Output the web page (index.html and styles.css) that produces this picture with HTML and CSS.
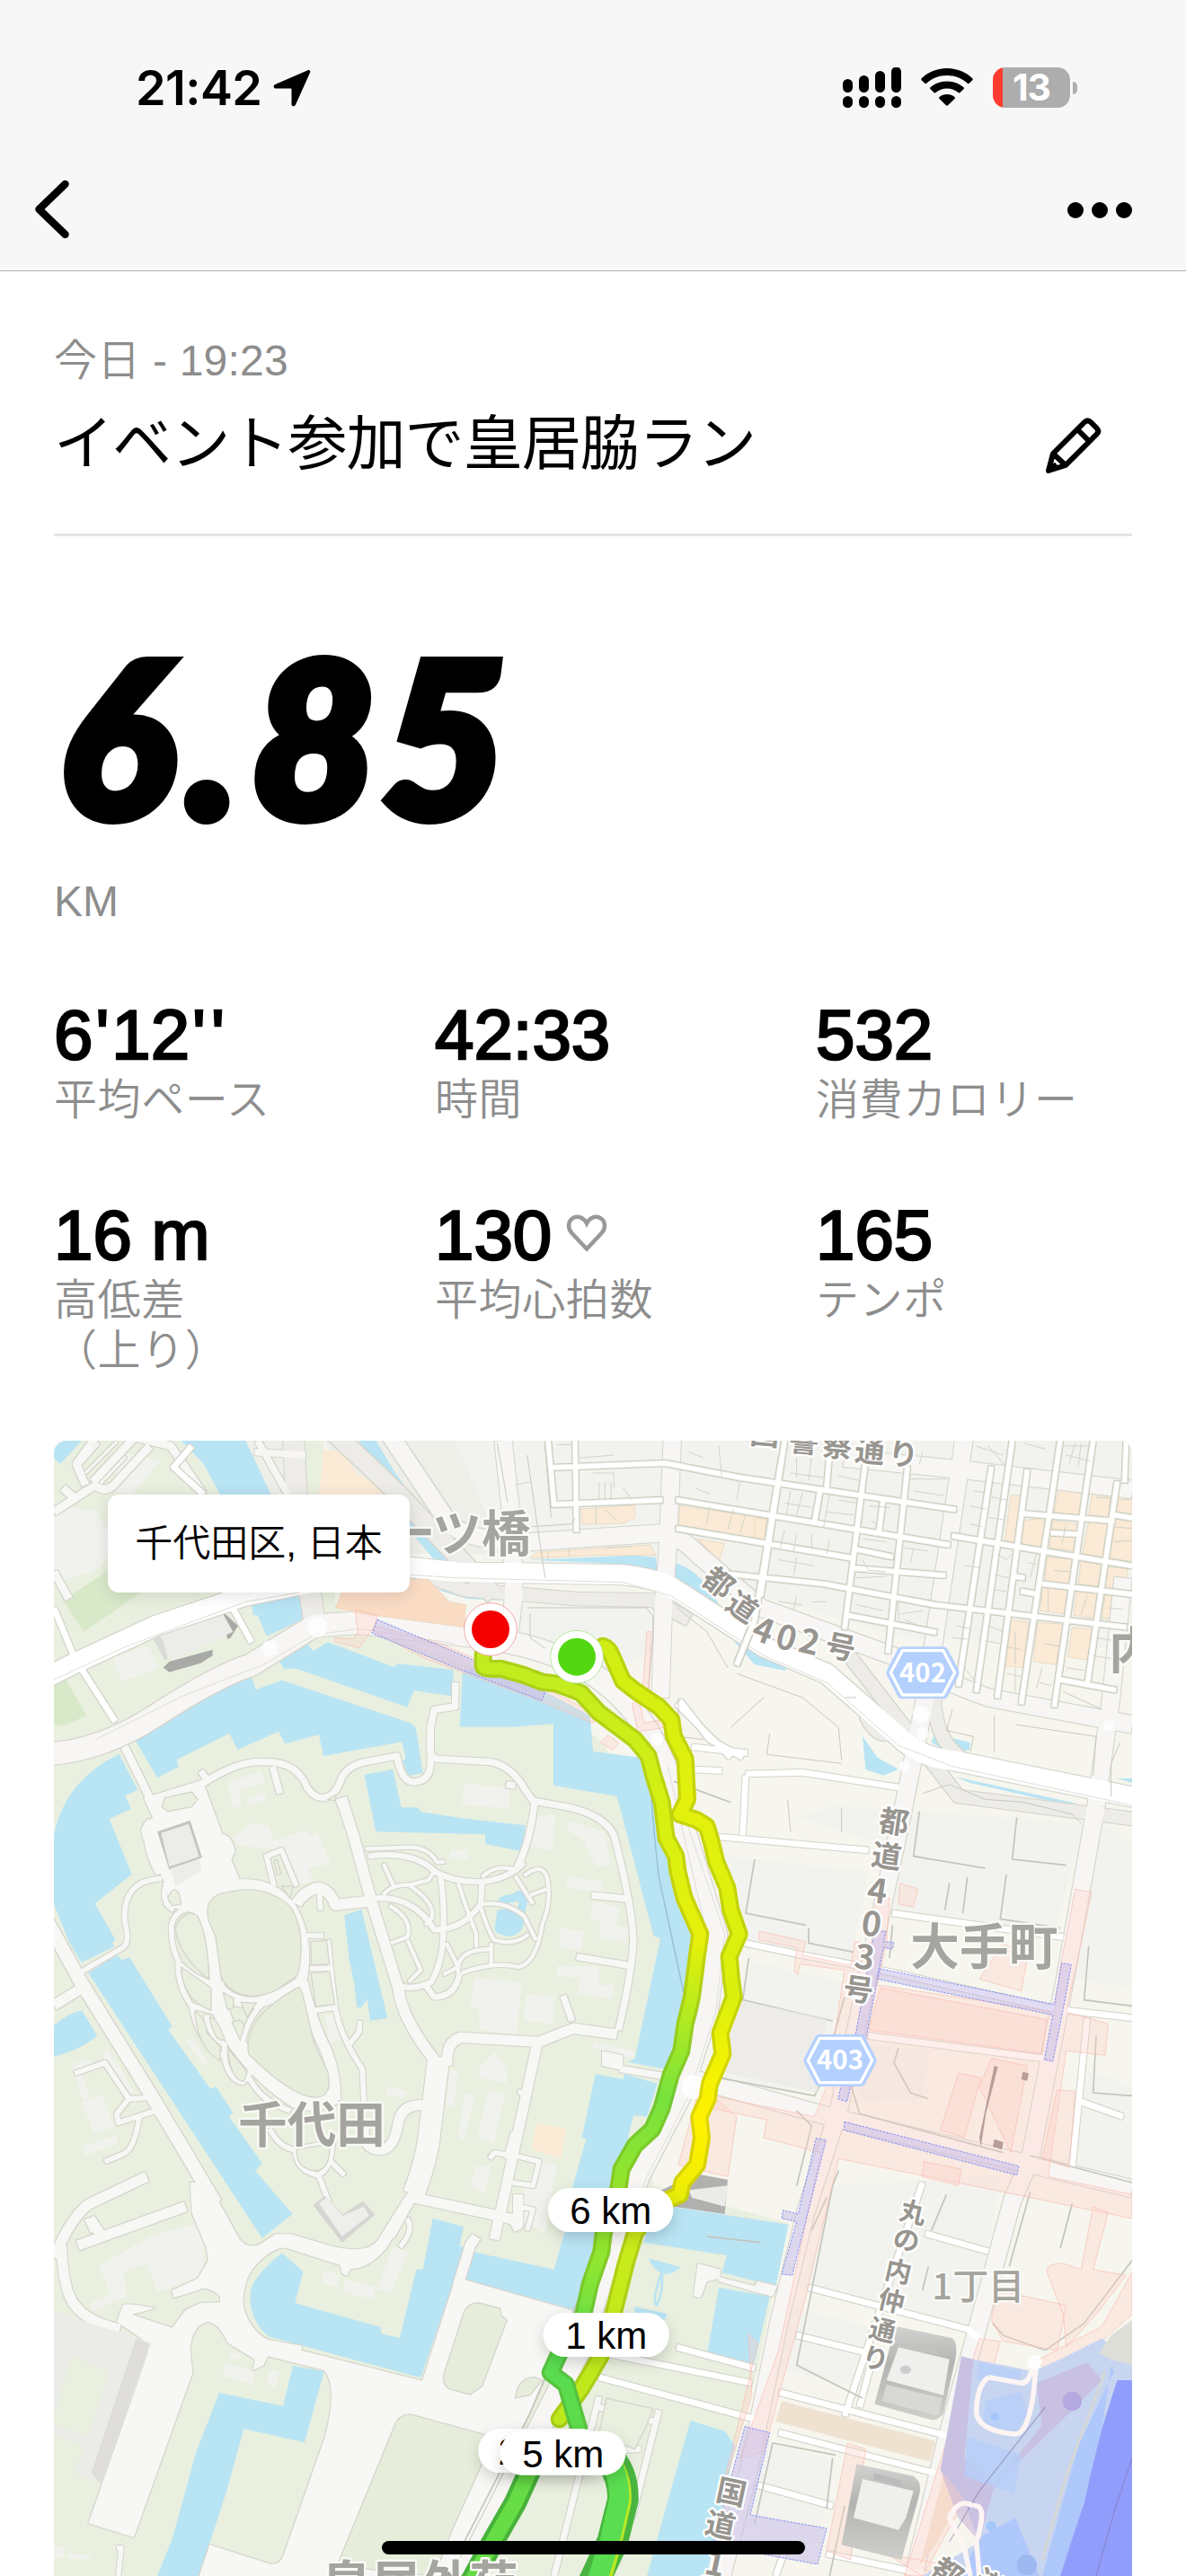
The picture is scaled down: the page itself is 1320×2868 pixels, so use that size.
FILE: index.html
```html
<!DOCTYPE html>
<html lang="ja">
<head>
<meta charset="utf-8">
<title>イベント参加で皇居脇ラン</title>
<link rel="stylesheet" href="styles.css">
</head>
<body>
<div class="screen">
  <header class="top">
    <div class="status">
      <div class="clock"><span>21:42</span>
        <svg class="loc" viewBox="0 0 42 42"><path d="M38.500 1.200C40.500.3 42 1.800 41 4L25 39.500C24 42 20.500 41.800 20.500 39V22.500Q20.500 21.500 19.500 21.500H3C.2 21.500-.2 18 2.200 17Z"/></svg>
      </div>
      <div class="indicators">
        <svg class="signal" viewBox="0 0 65 45"><path d="M5.500 18.500v4M23.500 14.500v8M41.500 9.500v13M59.500 5v17.500M5.500 37.500v2M23.500 37.500v2M41.500 37.500v2M59.500 37.500v2"/></svg>
        <svg class="wifi" viewBox="0 0 58 42"><path d="M29 0C41 0 51 5 57.300 11.200Q58.200 12.200 57.300 13.200L53.800 16.700Q52.800 17.600 51.800 16.700C45.500 11 38 7.900 29 7.900S12.500 11 6.200 16.700Q5.200 17.600 4.200 16.700L.7 13.200Q-.2 12.200.7 11.200C7 5 17 0 29 0ZM29 14.500C37 14.500 43.500 17.500 47.500 21.300Q48.400 22.200 47.500 23.200L43.600 27Q42.600 28 41.600 27.100C38 24 34 22.400 29 22.400S20 24 16.400 27.100Q15.400 28 14.400 27L10.500 23.200Q9.600 22.200 10.500 21.300C14.500 17.500 21 14.500 29 14.500ZM29 29C32.500 29 35.300 30.200 37.500 32Q38.400 33 37.500 34L30 41.300Q29 42.200 28 41.300L20.500 34Q19.600 33 20.500 32C22.700 30.200 25.500 29 29 29Z"/></svg>
        <div class="battery"><span>13</span></div>
      </div>
    </div>
    <nav class="nav">
      <svg class="back" viewBox="0 0 40 66"><path d="M34.500 5L5.500 33 34.500 61"/></svg>
      <svg class="more" viewBox="0 0 72 18"><circle cx="9" cy="9" r="9"/><circle cx="36" cy="9" r="9"/><circle cx="63" cy="9" r="9"/></svg>
    </nav>
  </header>

  <main>
    <section class="title">
      <div>
        <p class="date">今日 - 19:23</p>
        <h1>イベント参加で皇居脇ラン</h1>
      </div>
      <svg class="pencil" viewBox="0 0 64 64"><path d="M4 60L9 41 44 6Q47.500 2.500 51 6L57.500 12.500Q61 16 57.500 19.500L23 54ZM9 41L23 54M36 14L49 27M4 60L13 53"/></svg>
    </section>

    <section class="distance">
      <p class="big"><span>6.</span>85</p>
      <p class="unit">KM</p>
    </section>

    <section class="stats">
      <div><b class="pace">6<i>'</i>12<i>'</i><i>'</i></b><span>平均ペース</span></div>
      <div><b>42:33</b><span>時間</span></div>
      <div><b>532</b><span>消費カロリー</span></div>
      <div><b>16 m</b><span>高低差<br>（上り）</span></div>
      <div><b>130<svg class="heart" viewBox="0 0 46 42"><path d="M23 38.500L6.500 21C1 15 2.500 7 8 4S20 4 23 10C26 4 32.500 1 38 4S45 15 39.500 21Z"/></svg></b><span>平均心拍数</span></div>
      <div><b>165</b><span>テンポ</span></div>
    </section>

    <section class="map">
      <svg class="canvas" viewBox="60 42 3600 3792">
        <defs>
          <filter id="rim" filterUnits="userSpaceOnUse" x="0" y="0" width="3720" height="3900"><feMorphology in="SourceAlpha" operator="dilate" radius="4" result="d"/><feFlood flood-color="#d5d4cc"/><feComposite in2="d" operator="in"/><feMerge><feMergeNode/><feMergeNode in="SourceGraphic"/></feMerge></filter>
          <filter id="curb" filterUnits="userSpaceOnUse" x="0" y="0" width="3720" height="3900"><feMorphology in="SourceAlpha" operator="dilate" radius="7" result="o"/><feMorphology in="SourceAlpha" operator="dilate" radius="4" result="i"/><feFlood flood-color="#c9cabf"/><feComposite in2="o" operator="in" result="c"/><feFlood flood-color="#f1f1ea"/><feComposite in2="i" operator="in" result="k"/><feMerge><feMergeNode in="c"/><feMergeNode in="k"/><feMergeNode in="SourceGraphic"/></feMerge></filter>
          <filter id="drop" x="-30%" y="-50%" width="160%" height="230%"><feDropShadow dx="0" dy="18" stdDeviation="22" flood-opacity=".16"/></filter>
          <linearGradient id="gw" gradientUnits="userSpaceOnUse" x1="0" y1="760" x2="0" y2="3834"><stop offset="0" stop-color="#c0ec20"/><stop offset=".17" stop-color="#d6f012"/><stop offset=".31" stop-color="#e6f00a"/><stop offset=".4" stop-color="#aeea22"/><stop offset=".48" stop-color="#78e23e"/><stop offset=".58" stop-color="#96e52c"/><stop offset=".66" stop-color="#90e630"/><stop offset=".76" stop-color="#58dc50"/><stop offset="1" stop-color="#66dd45"/></linearGradient>
          <linearGradient id="ge" gradientUnits="userSpaceOnUse" x1="0" y1="720" x2="0" y2="3320"><stop offset="0" stop-color="#cfee14"/><stop offset=".2" stop-color="#e3f10c"/><stop offset=".45" stop-color="#d9f00e"/><stop offset=".53" stop-color="#f0f204"/><stop offset=".62" stop-color="#fff200"/><stop offset=".69" stop-color="#f2ee04"/><stop offset=".77" stop-color="#c9ec1a"/><stop offset="1" stop-color="#bde81c"/></linearGradient>
          <linearGradient id="shade" x1="0" y1="0" x2="0" y2="1"><stop offset="0" stop-color="#d2d2d0"/><stop offset=".4" stop-color="#b3b3b1"/><stop offset="1" stop-color="#cfcfcc"/></linearGradient>
          <g id="track-w"><path d="M1493 755V795Q1495 806 1550 803L1630 825 1690 848 1740 854 1820 885 1880 950 1940 995 2000 1040 2045 1095 2062 1160 2090 1250 2095 1290 2105 1370 2137 1430 2143 1480 2165 1570 2218 1690 2208 1760 2190 1900 2168 1990 2155 2080 2120 2160 2090 2270 2058 2342 2000 2395 1955 2475 1945 2540 1895 2690 1888 2750 1850 2860 1828 2960 1748 3090 1718 3155 1770 3195 1812 3340"/></g>
          <g id="track-e"><path d="M1893 728Q1915 735 1925 765L1960 845 2005 880 2080 930 2122 975 2130 1030 2168 1105 2175 1240 2150 1290 2205 1308 2240 1330 2255 1380 2272 1450 2308 1535 2320 1610 2348 1690 2315 1765 2322 1840 2330 1900 2285 2020 2293 2090 2250 2190 2243 2240 2215 2300 2223 2370 2208 2460 2158 2520 2150 2560 2060 2600 2000 2690 1970 2790 1930 2950 1885 3100 1820 3210 1748 3310"/></g>
        </defs>

        <rect class="city" x="60" y="42" width="3600" height="3792"/>
        <path class="lot" d="M1200 42H3660V740L2900 700 2200 500 1500 440ZM1560 590H2060V740L1900 830 1560 740ZM2540 1300 2660 1260 3500 1320 3400 1690 2830 1620 2800 1380ZM2290 1430 2780 1480 2720 1780 2340 1700ZM2380 1780 2700 1850 2600 2220 2260 2180ZM2780 2060 2980 2080 2960 2240 2740 2250ZM3560 1320 3660 1390V1870L3470 1840ZM3500 2140 3660 2200V2500L3440 2460ZM2660 2530 3220 2500 3130 3000 2560 2880ZM2500 2930 2780 3000 2760 3210 2480 3140ZM2440 3380 2670 3450 2610 3720 2350 3660Z"/>
        <path class="park" d="M60 42H960L1000 600 1300 740 1700 880 1900 1060 2060 1400 2180 1800 2120 2100 2050 2300 2060 2530 2510 2655 2410 3140 2220 3834H60Z"/>
        <path class="haze" d="M500 42 860 42 900 230 700 250ZM960 42H1400L1560 420H1240Z"/>
        <path class="lawn" d="M90 575 250 470 350 550 160 680ZM60 840H100L170 960 90 995 60 990Z"/>
        <g class="buildings">
          <path d="M60 300 100 265 200 275 240 340V430L208 472 90 510 60 470ZM255 768 375 725 410 800 288 848ZM290 80 415 110 320 222 250 210ZM640 1185 750 1145 765 1185 680 1210 685 1260 660 1270ZM700 1240 760 1215 770 1240 720 1262Z"/>
          <path d="M655 1370 720 1320 780 1330 790 1380 905 1340 915 1365 860 1390 940 1350 985 1455 910 1470 925 1515 880 1525 830 1410 680 1395ZM120 2125 180 2105 190 2130 130 2160ZM130 2160 155 2160 180 2235 155 2240ZM150 2250 220 2225 262 2335 195 2355ZM220 2090 240 2075 330 2215 310 2225ZM155 2400 270 2360 270 2390 165 2430ZM500 2045 525 2035 575 2120 560 2130ZM1175 2200 1240 2215 1230 2240 1170 2225ZM965 1965 1005 1955 1022 2040 980 2055Z"/>
          <path d="M1427 1188 1580 1200 1580 1270 1425 1260ZM1650 1300 1735 1290 1725 1410 1655 1400ZM1775 1310 1900 1350 1920 1460 1870 1465 1830 1380 1775 1340ZM1465 1835 1622 1850 1605 2025 1480 2010 1480 1940 1450 1930ZM1635 1890 1735 1900 1725 1990 1630 1980ZM1750 1670 1828 1680 1822 1745 1750 1735ZM1860 1580 1950 1600 1940 1660 1850 1640ZM1885 1650 1980 1670 1970 1715 1880 1705ZM1740 1795 1880 1800 1880 1860 1930 1860 1925 1905 1810 1890 1815 1835 1740 1830ZM1775 1498 1895 1515 1890 1550 1772 1535ZM1385 1410 1440 1405 1445 1440 1380 1440ZM1380 2145 1410 2145 1395 2270 1370 2260ZM1430 2220 1465 2230 1430 2380 1410 2370ZM1510 2210 1565 2225 1530 2390 1475 2370ZM1480 2140 1530 2085 1575 2140 1570 2190 1480 2170ZM1470 2465 1520 2460 1500 2560 1450 2530ZM1860 2050 2000 2080 1995 2105 1860 2070ZM1680 2450 1740 2460 1700 2690 1590 2620Z"/>
          <path d="M270 2765 380 2700 525 2660 560 2700 560 2830 405 2885 370 2790 290 2820 305 2900 190 2950 180 2925 250 2890 210 2800ZM960 2812 1015 2830 1005 2870 955 2855ZM1030 2840 1135 2868 1125 2910 1025 2885ZM1190 2735 1243 2752 1185 2890 1140 2875ZM635 3122 733 3150 722 3195 622 3165ZM650 3085 685 3090 680 3110 645 3105ZM780 3148 812 3150 800 3205 772 3190ZM60 3735 95 3737V3773H60ZM105 3760 185 3765V3778H105Z"/>
        </g>
        <g class="beige">
          <path d="M960 70 1030 85 1070 150 1180 215 1130 222H945ZM1670 2320 1770 2340 1755 2440 1655 2410Z"/>
          <path d="M1820 270 2000 258V300L1960 318 1825 322ZM1670 415 2050 390 2070 425 1860 425 1650 435ZM2150 260 2440 300 2432 378 2250 350 2145 330ZM2210 370 2300 385 2280 445ZM2400 300 2445 305 2440 378 2400 375Z"/>
          <path d="M3255 225 3290 225 3270 382 3235 375ZM3420 182 3500 192 3485 300 3400 285ZM3530 200 3590 210 3580 300 3515 290ZM3610 210 3660 212V292L3605 285ZM3290 310 3370 300 3360 400 3280 385ZM3395 310 3480 320 3475 410 3385 400ZM3515 310 3585 318 3570 432 3495 420ZM3600 302 3660 308V445L3580 435ZM3375 430 3465 437 3450 522 3370 515ZM3490 445 3560 455 3545 528 3480 520ZM3578 463 3645 470 3640 545 3565 538ZM3360 530 3450 540 3440 622 3355 610ZM3475 540 3545 550 3540 635 3465 625ZM3570 555 3635 560 3620 642 3560 635ZM3255 640 3315 648 3295 800 3235 795ZM3345 650 3430 655 3405 790 3330 780ZM3460 665 3535 672 3520 775 3445 765Z"/>
        </g>

        <g class="water">
          <path d="M60 42H152L82 120 60 100ZM485 42 560 120 615 222 700 400 715 549 725 625 740 625 770 695 905 632 870 549 785 222 700 42ZM1080 42H1135L1200 150 1300 290 1370 400 1450 440 1330 440 1230 320 1120 160Z"/>
          <path d="M330 1040Q500 910 720 833L735 873 822 842 1250 985 1268 1000 1292 1152 1240 1162 1225 1110 1235 1105 1222 1048 960 1095 945 1024 832 1054 810 1013 673 1074 646 1020 470 1108 476 1132 405 1168ZM805 765 900 712 925 745 975 715 1195 798 1210 787 1395 808 1390 895 1262 877 1240 932 865 802 828 805Z"/>
          <path d="M1425 810 1480 800 1700 880 1850 960 1860 1080 2020 1100 2070 1290 2120 1460 2200 1700 2170 1910 2140 2110 2095 2140 1978 2118 2000 2105 2085 1705 2062 1695 1948 1260 1940 1230 1728 1193 1728 988 1590 998 1415 998Z"/>
          <path d="M60 1365Q90 1180 278 1088L340 1208 298 1228 318 1272 245 1305 320 1490 197 1588 265 1708 255 1720 262 1732 152 1785 110 1715 60 1590ZM175 1820 270 1758 288 1777 312 1767 455 1998 442 2010 583 2208 600 2198 658 2285 645 2300 755 2455 732 2480 857 2625 755 2705ZM60 1995Q120 1945 155 1947L205 2030Q150 2075 60 2100ZM1030 1627 1087 1607 1174 1970 1116 1980 1106 1908 1085 1935 1072 1935 1062 1850 1045 1770ZM1097 1157 1192 1140 1220 1267 1275 1267 1285 1282 1440 1305 1635 1327 1620 1413 1500 1390V1357L1135 1348 1117 1260Z"/>
          <path d="M1543 1580Q1545 1560 1590 1557 1620 1530 1645 1560L1630 1640Q1630 1690 1580 1698 1530 1690 1532 1670L1540 1610 1575 1605 1610 1600 1612 1580 1570 1588Z"/>
          <path d="M1868 2158 1962 2175 1965 2157 2075 2190 2040 2300 1995 2295 1950 2480 1900 2600 1860 2800 1800 2945 1432 2845 1455 2750 1730 2810 1765 2685 1790 2540 1837 2375 1823 2368ZM822 2755 892 2817 865 2923 1150 3002 1153 3025 1215 3038 1270 2810 1292 2810 1325 2640 1428 2667 1415 2730 1432 2738 1395 2850 1285 3172 780 3035Q715 2990 715 2895 715 2840 822 2755ZM612 3222 825 3266 858 3132 962 3150 897 3388 694 3342 640 3540 545 3834H405L455 3710 535 3420Z"/>
          <path d="M2060 2590 2120 2600 2513 2660 2470 2870 2405 2850 2290 2820 2307 2763 2030 2720ZM2280 2870 2450 2900 2400 3120 2370 3135 2240 3100ZM2185 3315 2300 3350 2335 3400 2240 3834H2040ZM2045 2773 2153 2803Q2085 2860 2045 2773ZM2000 2935 2108 2958 2090 3000 2000 2970Z"/>
          <path d="M1650 440 2000 425 2070 432 2075 475 1980 455ZM1340 540H1545V575L1440 570ZM2135 450Q2230 480 2290 610L2520 790 2500 810 2400 790 2320 700 2130 510ZM2760 1030 2810 1100 2880 1140 2830 1160 2770 1140ZM3000 1020 3118 1050V1075L3050 1085 2990 1050ZM3070 1165 3480 1255 3440 1258 3120 1185ZM3610 1170 3660 1185V1170Z"/>
          <path d="M2090 2820Q2055 2910 2072 2930 2095 2890 2090 2820" fill="none" stroke="#b9e4f4" stroke-width="8"/>
        </g>

        <g class="paths" filter="url(#rim)">
          <path stroke-width="22" d="M385 1240 560 1185Q680 1108 760 1115 870 1110 905 1200 930 1237 960 1235 1000 1230 1020 1170 1040 1128 1100 1115L1205 1095Q1220 1180 1260 1182 1320 1180 1318 1110L1318 985M790 1130 815 1220M1010 1240 1035 1290M550 1145 575 1180M1400 850V930L1330 940 1318 1000 1315 1070Q1320 1108 1350 1105L1520 1115Q1590 1130 1635 1210L1660 1245 1770 1265Q1895 1290 1930 1360 1990 1590 1995 1710 1990 1820 1945 2010M1665 1250Q1650 1390 1600 1480M1855 1560 1970 1572M1805 1765 1980 1795M1760 1895 1790 1980M1950 2140 2100 2165M1570 1190 1600 1195"/>
          <path stroke-width="26" d="M288 1048 385 1245M165 190 135 120 200 30M190 180 330 30 450 60 560 222M195 190Q230 220 260 190L380 60M60 280 200 190M90 200 130 235M60 480 110 570"/>
          <path stroke-width="9" d="M140 130 210 50M165 150 270 45M215 185 300 95"/>
          <path class="fill" d="M360 1235 560 1185 622 1355Q655 1360 665 1415L652 1440 680 1508Q780 1510 850 1590L700 1545Q570 1550 570 1610L590 1850 560 1700 530 1620 450 1600 430 1520 350 1340 390 1300Z"/>
          <path stroke-width="36" d="M560 1610Q590 1700 600 1850 640 1922 730 1920 800 1910 885 1850 915 1710 850 1600 790 1520 690 1525 600 1530 560 1580ZM890 1850Q920 1980 960 2060 1000 2140 1000 2245M1020 1235 1060 1360 1120 1580 1210 1870Q1220 1970 1330 2110M870 1590Q890 1550 940 1535 980 1540 1000 1592L1115 1580"/>
          <path stroke-width="54" d="M600 1850Q610 1960 660 2040 750 2170 870 2245 930 2265 1000 2230"/>
          <path stroke-width="17" d="M545 1605Q470 1595 452 1660 450 1730 475 1780 470 1860 520 1930 540 2050 630 2100 640 2175 690 2185 720 2160 715 2130M480 1790Q530 1840 590 1855M520 1930 600 1950M570 1960Q570 2020 630 2060V2100M712 2170Q750 2250 850 2280M380 1310Q350 1340 370 1380 380 1440 410 1490M440 1510Q410 1580 460 1610M145 1820 290 1735Q315 1720 297 1650 285 1510 420 1505M945 1535 950 1610M905 1695H960M975 1710Q985 1820 1000 1940 1020 2040 1090 2140L1095 2250M1045 2060 1080 2015 1082 1980M915 1805H985M930 1945 1000 1935M770 1910Q710 1960 690 2050M780 2340Q810 2400 860 2410L990 2385M865 2410Q870 2480 940 2495 985 2480 990 2390M985 2450 1030 2495M945 2500 980 2590M1610 2215 1640 2230M795 1530 770 1430 820 1410 870 1530M130 2155 230 2120 310 2240 330 2240 380 2235M310 2240 270 2290 275 2320 400 2280M345 2300Q330 2410 290 2425L230 2450"/>
          <path stroke-width="13" d="M1100 1405 1250 1400Q1310 1400 1340 1450L1365 1448M1160 1455 1195 1530M1160 1560Q1180 1525 1250 1525L1310 1510 1330 1480M1250 1530Q1340 1590 1320 1640L1300 1660M1180 1595Q1260 1640 1240 1700L1185 1720M1240 1710 1285 1810 1245 1850M1490 1500Q1530 1455 1600 1475M1600 1495 1660 1590M1630 1495Q1700 1440 1710 1520 1720 1590 1690 1660 1670 1790 1610 1800 1530 1780 1420 1820M1490 1590Q1570 1580 1630 1630L1670 1710M1485 1600Q1510 1680 1530 1710 1600 1730 1645 1690M1520 1720V1790M1410 1820Q1400 1740 1520 1740M1410 1520 1430 1580 1470 1690V1735M1650 1560 1705 1540M1370 1720 1410 1800M1360 1825 1410 1800"/>
          <path stroke-width="19" d="M1110 1430Q1260 1410 1330 1480 1400 1520 1490 1515 1580 1505 1630 1450M1350 1490Q1365 1590 1360 1680 1360 1780 1320 1850 1260 1880 1210 1862M1300 1860 1330 1900Q1400 1900 1415 1820M1490 1510 1485 1590Q1420 1680 1330 1675 1260 1560 1130 1570"/>
          <path stroke-width="34" d="M1375 2130Q1365 2050 1420 2035L1680 2050 1795 2005 1940 2025M1095 2330Q1090 2410 1150 2410 1195 2410 1210 2320 1220 2260 1290 2260M1675 2050 1560 2580 1530 2710M60 1928 145 1875M220 2700 180 2640"/>
          <path stroke-width="44" d="M40 1650 150 1850 380 2220 500 2420 600 2590"/>
          <path stroke-width="72" d="M1345 2100 1310 2390Q1290 2490 1260 2560"/>
          <path stroke-width="34" d="M1280 2520 1180 2700M1260 2570 1540 2630 1620 2650M1610 2560 1610 2660 1590 2670M1470 2700 1450 2730 1410 2860M60 2770Q120 2630 180 2590L370 2500M85 2730Q90 2880 130 2930 170 2985 280 3010M140 2730 500 2600"/>
          <path stroke-width="16" d="M170 2640 190 2685M1240 2640Q1265 2680 1215 2735M1610 2600 1660 2610 1640 2680M1600 2430 1680 2450 1660 2530 1590 2520M1515 2440 1530 2420 1590 2430M270 3740 285 3740 275 3834M1595 2350 1570 2440"/>
          <path class="fill" d="M515 2520H575L680 2710Q710 2745 750 2725L800 2692H850L990 2732Q1100 2760 1140 2715L1230 2570 1280 2560 1170 2740Q1110 2810 1050 2808L1038 2833 1020 2820 1015 2795 835 2738Q790 2735 730 2800 690 2850 692 2930 710 3010 775 3045L890 3065 885 3080 1290 3182 1400 2840 1432 2845 1800 2950 1720 3130 1400 3834H545L580 3730 785 3795Q815 3795 825 3770L965 3370Q1010 3200 962 3146L875 3125 775 3100 760 3130 725 3148 730 3110 640 3055Q610 2985 570 2985 520 3000 515 3080L523 3155 327 3705 175 3658 372 3095 380 3060 270 2985 290 2930Q300 2920 400 2940L320 2960 455 3005 500 2945 550 2922 615 2920V2900Q570 2860 540 2880L460 2905 455 2880 540 2840 575 2780 570 2740 520 2620Z"/>
          <path class="fill" d="M1890 2080 1960 2095V2145L1890 2130ZM2210 2790 2285 2810V2840L2240 2850 2220 2905 2195 2900ZM2280 2835 2400 2865 2410 2850 2475 2865 2460 2900 2400 2885 2280 2850Z"/>
          <path stroke-width="20" d="M1880 3235 1730 3834M1880 3270 2070 3320M2080 3280 1990 3640M1870 3420 2020 3410"/>
        </g>
        <g class="inset">
          <path d="M640 1550Q770 1520 850 1600 890 1660 885 1750 880 1820 870 1830L800 1878Q700 1920 640 1865 615 1840 615 1810L600 1700 575 1640Q560 1560 640 1550ZM880 1868 890 1890 930 2060 975 2150Q990 2240 930 2235 850 2230 710 2090 700 2040 735 1980 770 1930 870 1870ZM1255 3295 1530 3370 1390 3680 1330 3834 1005 3800 1200 3325Q1215 3290 1255 3295ZM1480 2922 1550 2940 1555 2965 1573 2980 1490 3200 1450 3228 1380 3210Q1350 3190 1365 3150L1430 2950Q1445 2920 1480 2922ZM1665 3170 1690 3180 1650 3230 1600 3240Q1610 3170 1665 3170Z"/>
          <path class="thin" d="M440 1570Q460 1520 480 1560L485 1590 455 1595ZM465 1670Q500 1600 540 1630 575 1700 578 1840 480 1770 465 1670ZM485 1800 585 1870V1945Q490 1910 485 1800ZM625 1885 660 1905V1935L640 1943ZM685 1918 735 1920 705 1968ZM655 1985Q690 1965 695 2000L682 2045ZM580 1970Q600 1960 630 2040 600 2060 580 1970ZM640 2070 705 2150 695 2182Q650 2180 640 2070ZM530 1950Q570 1970 570 2020L615 2065V2115Q540 2070 530 1950ZM820 1530 860 1530 848 1570ZM795 1445 805 1440 818 1490 805 1492ZM870 2410 980 2390Q985 2470 940 2480 870 2480 870 2410ZM430 1235 520 1215 540 1240 520 1265 440 1280 420 1265ZM975 1240 1000 1225V1245ZM918 1715 970 1710 980 1790 920 1793ZM918 1820 980 1815 998 1925 935 1932ZM1905 3240 2060 3275 2040 3330 2000 3410 1880 3360Z"/>
        </g>
        <g class="blocks">
          <path fill="#a9a9a8" d="M620 610 675 660 650 700 640 705ZM445 780 590 740 590 760 550 785 445 815 425 800Z"/><path fill="#d9d9d7" d="M390 700 420 690 440 770 430 775Z"/><path fill="#ececea" d="M415 695 620 612 658 680 455 775Z"/>
          <path fill="#c4c4c2" d="M405 1348 515 1310 555 1435 445 1475Z"/><path fill="#ececea" d="M418 1352 510 1322 545 1432 445 1465ZM450 1470 545 1440 552 1480 465 1530Z"/>
          <path fill="#d6d5d2" d="M925 2595 965 2565 1025 2625 1092 2582 1132 2627 1022 2720Z"/><path fill="#eeeeec" d="M945 2590 970 2570 1025 2630 1095 2600 1112 2630 1022 2700Z"/>
          <path fill="#ebebe8" d="M60 2950 290 3025 245 3150 120 3100 60 3300ZM290 3020 385 3055 215 3525 130 3490ZM60 3330 170 3370 165 3400 60 3360Z"/><path fill="#dedddb" d="M335 3040 380 3060 215 3525 185 3490Z"/>
          <path fill="#b0b0ae" d="M2060 2560 2200 2490 2310 2510 2300 2625 2130 2600Z"/><path fill="#ebebe9" d="M2180 2545 2310 2530 2300 2600 2190 2570Z"/>
        </g>

        <g class="roads" filter="url(#rim)">
          <g stroke="#edece8"><path stroke-width="70" d="M860 30 870 230 930 650"/><path stroke-width="60" d="M1000 20 1200 210 1400 420 1530 560"/><path stroke-width="44" d="M1270 480 1430 540 1800 570 2060 575 2180 640M2700 740 3080 1230 3700 1310M2870 1000Q2820 1060 2770 960M3000 900Q3000 1060 3120 1120" /></g>
          <g stroke="#f7f6f4"><path stroke-width="74" d="M0 1090Q200 1090 400 960 600 830 720 790L930 660 1080 650 1500 700Q1760 740 1900 850 2030 950 2100 1130L2270 1690 2240 1950 2150 2230 2010 2500 1800 3110 1430 3834"/><path stroke-width="58" d="M1180 20 1360 290Q1400 380 1650 380L2100 350Q2150 360 2220 430L2420 600 2860 760Q3040 850 3180 900L3660 990M1560 42 1590 320 1595 560 1580 700M2125 30 2110 400 2095 600 2085 900M3100 30 3000 700 2960 950 2890 1300 2800 1720 2680 2280 2570 2620 2480 2990 2380 3480 2290 3834M3540 1260 3440 1820 3320 2440 3260 2580 3140 3020 3040 3380 2930 3834M2200 2175 2650 2300 3660 2540M2700 100 3100 140 3660 205M3630 500 3590 900 3540 1260"/><path stroke-width="22" d="M730 80 900 90M740 42 840 220"/></g>
          <g stroke="#fff"><path stroke-width="66" d="M0 850 130 785 400 660 700 560 1000 500 1250 465 1400 480 1960 490Q2060 500 2120 530L2430 730 2640 820 2880 1030Q2950 1100 3060 1110L3700 1240"/><path stroke-width="20" d="M60 600 130 770 265 980M640 570 720 715M520 60 460 130 560 222M2140 920 2320 1100M2190 1065 2375 1085M2200 1140 2290 1145M2370 1160 2360 1360M2370 1155 2560 1150 2880 1200M2280 1365 2780 1410M2345 1715 2560 1760 2800 1805 3400 1940 3660 1970M2860 1620 3430 1700M2780 2030 3360 2105M3510 1970 3460 2470M3490 2250 3630 2300M2960 2520 2700 3300M2970 2690 3180 2750M2580 2870 3110 3010 3160 3050M2540 3030 2780 3090M2480 3220 3060 3370M2480 3355 3000 3490M2790 3120 2750 3270M2410 3530 2660 3600M2640 3760 3000 3834M2500 3750 2470 3834M1880 3170 2400 3310M1900 3090 2390 3190M2140 3070 2400 3140M2150 910 2250 1040 2360 1100"/></g>
        </g>
        <path class="lane" d="M60 840 300 730 700 580 900 545M1250 490 1400 500 1960 515 2120 560 2430 760 2640 850 2880 1060 3060 1130 3660 1260M200 1040 500 890 760 790 930 690 1080 670 1400 720M2140 1220 2300 1690 2270 1950 2180 2230 2040 2500 1840 3110 1470 3834M2110 1130 2240 1690 2210 1950 2120 2230"/>
        <g class="streets" filter="url(#curb)"><path d="M1710 42 1730 255 2090 240M1720 132 2100 117 2350 165 3070 272M1800 42 1805 345M2140 240 3050 390M2140 335 2730 435M2290 485 2630 520 3000 590 3640 665M2710 625 3005 682M3060 360 3660 460M2740 405 2860 430M2730 468 3035 492M3600 290 3660 300M3290 285 3600 310M3390 350 3490 355M3260 495 3300 500M3290 545 3345 555M3360 520 3660 555M3420 840 3605 875M2490 100 2400 640 2340 790M2500 42 2420 560M2620 200 2600 310M2650 80 2640 200M2770 110 2700 670M2910 130 2845 750M2830 230 2815 345M3190 130 3080 860M3260 42 3140 880M3310 140 3210 900M3420 42 3290 920M3530 42 3400 930M3610 180 3510 860M3640 42 3635 180"/></g>
        <path class="plots" d="M2540 100V165M2590 90 2580 175M2520 150 2630 165M2680 160 2750 175M2830 60 2820 130M2960 80 2950 120M2920 170H3040M2930 210 3030 225M2520 210 2505 290M2560 215 2540 290M2500 250 2590 265M2650 220 2630 330M2680 240 2740 250M2640 280 2730 290M2780 260 2850 265M2790 310 2810 320M2500 340 2485 400M2540 350 2530 410M2590 355V400M2650 370 2640 420M2480 380 2600 400M2760 370 2840 380M2900 400 2980 410M2930 400 2920 450M2480 440 2600 460M2540 430 2530 490M2760 440 2780 475 2840 480M2740 500 2840 495M2540 560 2530 610M2590 580H2640M2480 580 2560 590M2740 590 2830 610M2880 580V640M2890 620 2960 610M2900 640 2950 660M3130 210 3170 215M3120 260 3170 270M3190 230 3240 240M3180 300 3230 305M3120 320 3160 330M3100 460 3150 465M3210 420 3240 440 3260 420M3200 490 3250 500M3200 540 3240 545M3340 420 3320 500M3310 450 3340 455M3070 660 3120 670M3060 700 3110 705M3180 660 3230 680M3170 710 3220 720M3100 800 3140 850M3240 820 3290 830M3270 800V880M3350 850 3390 860M3360 800 3340 870M3540 700 3600 710M3530 760 3590 770M3440 800 3500 810M3440 90 3520 110M3470 50 3450 120M3490 50 3480 130M3430 60H3520M3300 50 3370 70M3180 60 3240 130M3140 60 3230 90M3540 230 3590 235M3620 240 3660 236M3440 320 3425 390M3600 330 3660 335M3600 380 3660 375M3400 475 3450 480M3380 540 3380 610M3510 560 3490 620M3580 600 3625 605M3270 680V790M3240 730 3290 740M3370 720 3420 730M1740 55H1790M1810 100 1930 90M1860 150H1930V200M1880 180V240M1900 180V240M1920 180V240M1960 200 1990 240M2180 80 2230 100M2280 60 2290 160M2200 200 2250 220M2350 180 2340 240M2250 260 2240 320M2330 270 2310 340M2370 290 2350 350M1870 260V320M1900 270 1940 310M1710 410V440M1780 400V430M1900 400 1990 395M1600 190 1650 180"/>
        <g class="edges">
          <path d="M1640 90 1700 500M1540 50 1575 250M1700 60 1720 300M1640 330 1790 320 1800 300M2060 700 2040 930M1640 600H2040L2060 630V720M1650 620V700L1700 735M2340 820 2560 900 2680 1000 2690 1110M2430 900 2320 1000M2140 600 2240 680 2310 800M2145 900V1030L2230 1040M3270 990 3540 1030 3530 1160M3060 940 3040 1010 3130 1030 3120 1080M3200 960V1080M3430 880 3560 940M3620 1050 3590 1120V1230M2510 1240 2520 1350M2690 1270 2690 1350M2700 900H2740M2450 1020 2440 1090 2690 1120M2960 1220 3050 1190 3170 1240 3300 1250 3460 1290 3490 1320"/>
          <path class="wide" d="M2950 1280 2930 1430 3170 1470M3275 1300 3260 1440 3440 1460M3240 1490 3220 1640 3420 1670M3050 1520 3035 1610M3110 1500 3095 1620M2400 1440 2370 1620 2570 1660M2580 1670 2580 1720 2730 1750M2380 1770 2360 1910 2660 1980M3515 1730 3500 1910 3660 1930M2880 2070 2865 2120 2920 2220 2980 2240M2860 1660 2850 1770M3540 2030 3530 2220 3660 2230M2280 2170 2600 2230 2620 2190 2700 1900M2720 2190 2750 2290 3230 2420M3320 2430 3660 2520M2540 2280 2590 2330 2540 2530M2680 2480 2660 2530 2540 3130 2760 3240M3040 2560 2990 2680M3320 2550 3250 2800M3460 2590 3420 2740M3660 2780 3500 2990 3370 3080 3230 3030 3195 2990M2670 3430 2460 3390 2400 3660M2660 3440 2640 3610M2700 3600 2650 3834M2240 2700 2420 2720M2130 1180 2320 1250M1900 2700 1650 3290 1420 3740M2590 2680 2640 2570M2960 2880 2980 2800"/>
        </g>

        <g class="beige"><path fill="#f0e2d0" d="M2490 3250 3003 3383 2985 3452 2470 3318ZM3030 3500 3070 3490 3105 3540 3010 3720 2950 3800Z"/><path d="M1000 600 1040 505 1310 505 1380 580 1435 590 1430 665 1090 620Z" style="fill:#fadcc5"/></g>
        <g class="pink">
          <path d="M1065 605 1140 625 1130 665 1110 690 1078 735 1050 725 1000 715V700L1060 705 1075 680ZM1130 660 1350 720 1700 870 1880 960 1860 985 1680 910 1300 770 1130 680ZM1990 920 2015 910 2030 985 2090 975 2095 1000 2010 1015ZM1885 1050 1910 1025 1945 1050 1925 1075ZM2040 680 2055 680 2045 880 2025 880Z"/>
          <path d="M2415 1680 2570 1715 2560 1760 2720 1795 2735 1715 2790 1720 2805 1560 2850 1570 2840 1720 2810 1860 3400 1950 3420 1800 3470 1540 3525 1550 3490 1720 3440 1950 3580 1990 3570 2095 3440 2080 3380 2500 3660 2560V2640L2980 2500 2680 2440 2570 2900 2430 3420 2350 3440 2480 3080 2620 2420 2430 2370 2440 2310 2200 2260 2210 2220 2600 2300 2640 2200 2700 1810 2550 1790 2545 1825 2532 1815 2540 1735 2415 1710ZM2885 1520 2945 1540 2930 1600 2880 1590Z"/>
          <path d="M2820 1870 3375 1975 3360 2090 2780 2010ZM3230 1720 3310 1770 3290 1880 3150 1840ZM3080 2155 3155 2170 3100 2370 3020 2345ZM3190 2105 3310 2130 3255 2420 3150 2200ZM3410 2210 3470 2215 3450 2470 3360 2440ZM2270 2240 2340 2300 2310 2500 2145 2460 2200 2260ZM2965 2450 3090 2475 3080 2530 2960 2500ZM2380 3025 2410 3060 2280 3590 2390 3230Z"/>
          <path d="M3530 2600 3580 2620 3530 2810 3640 2830 3540 2960 3440 3070 3430 2960 3380 2830Q3360 2790 3430 2790L3490 2810ZM3210 2880 3440 2930 3410 3080 3230 3050 3190 2980ZM3150 3040 3220 3050 3140 3340 3080 3620 2960 3834H2900L3010 3480ZM2710 3390 2770 3410 2720 3780 2640 3750ZM3660 2820V2960L3500 3100 3400 3150 3330 3120 3560 3000ZM2730 3690 2740 3740 3000 3790 3080 3834H2960Z"/>
        </g>
        <g class="blue">
          <path d="M3090 3100 3130 3110 3330 3150 3420 3110 3560 3040 3660 3130V3834H2960L3150 3720 3090 3560 3020 3480Z" fill="#c8d5f0"/>
          <path d="M3590 3130 3560 3340 3440 3834H3360L3480 3400 3600 3150ZM3160 3700 3270 3640 3350 3834H3080Z" fill="#afc8fb"/>
          <path d="M3610 3180H3660V3834H3420L3450 3740 3500 3590 3520 3500 3560 3340Z" fill="#919dfb"/>
          <path d="M3090 3100 3130 3110 3100 3440 3200 3530 3360 3330 3340 3190 3510 3120 3560 3180 3410 3330 3200 3530 3150 3720 3080 3640 3020 3480Z" fill="#c9b4d8" opacity=".6"/>
          <path d="M3660 2980 3590 3030 3550 3090 3590 3110 3660 3130Z" fill="#deded9"/>
          <path d="M3150 3120 3290 3150 3280 3190 3140 3180ZM3230 3230 3290 3220 3310 3290 3270 3360 3160 3330 3170 3250ZM3110 3370 3290 3430 3265 3560 3100 3500Z" fill="#b5cef8" opacity=".75"/>
          <circle cx="3460" cy="3250" r="32" fill="#b4a9e0"/><circle cx="3308" cy="3797" r="34" fill="#9db7f0"/><circle cx="3190" cy="3668" r="17" fill="#a3c6fb"/><circle cx="3202" cy="3302" r="14" fill="#a3c6fb"/>
          <path d="M3570 3150 3440 3500 3360 3780" fill="none" stroke="#d6d8d4" stroke-width="8"/><path d="M3050 3720 3150 3550 3370 3270M3660 3440 3600 3620 3540 3834" fill="none" stroke="#8076a8" stroke-opacity=".5" stroke-width="4"/>
        </g>
        <g class="drive"><path d="M3180 3170 3290 3190Q3320 3190 3330 3120M3180 3170Q3140 3200 3140 3290 3150 3350 3270 3360 3310 3360 3330 3230L3340 3130M3130 3600Q3180 3590 3140 3720L3150 3834M3130 3600Q3080 3570 3050 3640L3100 3740 3120 3834"/></g>
        <g class="purple"><path d="M1140 640 1380 740 1700 880 1690 910 1400 800 1122 685ZM2815 1805 3400 1925 3425 1787 3457 1792 3430 1940 3395 2115 3367 2110 3395 1960 2810 1840ZM2700 2317 3282 2465 3275 2495 2698 2345ZM2800 1680 2838 1680 2830 1715 2865 1718 2860 1740 2830 1735 2760 2100 2725 2090ZM2690 2190 2720 2200 2708 2250 2678 2240ZM2605 2372 2638 2378 2525 2830 2490 2825 2540 2650 2490 2640 2495 2612 2545 2625ZM2367 3335 2450 3355 2385 3630 2640 3675 2610 3795 2260 3730Z"/></g>
        <g class="blocks">
          <path fill="url(#shade)" d="M2870 3000 3060 3040Q3080 3060 3070 3110L3030 3290Q3010 3320 2980 3310L2800 3260Z"/><path fill="#efefed" d="M2880 3070 3050 3110 3030 3230 2840 3180Z"/><path fill="#d8d8d6" d="M2840 3195 3025 3240 3015 3300 2825 3250Z"/><ellipse cx="2904" cy="3145" rx="18" ry="14" fill="#ccc"/><path fill="#c2c2c0" d="M2925 3055 3010 3075V3095L2920 3075Z"/>
          <path fill="url(#shade)" d="M2740 3460 2930 3500Q2960 3520 2950 3560L2890 3780 2690 3730Z"/><path fill="#efefed" d="M2760 3510 2930 3550 2905 3640 2880 3680 2730 3640Z"/><path fill="#bbb" d="M2800 3490 2890 3515V3535L2795 3510Z"/>
          <path fill="#b89d98" d="M3200 2130 3212 2133 3172 2290 3155 2400 3150 2370ZM3295 2150 3315 2155 3310 2180 3290 2175ZM3200 2375 3230 2385 3225 2410 3195 2400Z"/>
          <path fill="#ebe8e5" opacity=".6" d="M2350 1910 2640 1970 2610 2220 2290 2150Z"/>
        </g>

        <g class="nodes"><circle cx="2195" cy="2200" r="40"/><circle cx="2075" cy="1040" r="20"/><circle cx="2955" cy="955" r="28"/><circle cx="2960" cy="1020" r="20"/><circle cx="3582" cy="993" r="18"/><circle cx="2900" cy="1130" r="18"/><circle cx="3335" cy="3120" r="24"/><circle cx="940" cy="665" r="34"/><circle cx="780" cy="735" r="26"/></g>
        <path d="M2050 1090Q2050 1240 2080 1500L2170 1920" fill="none" stroke="#7fa5b5" stroke-width="4" opacity=".6"/>

        <g class="route">
          <g stroke="url(#ge)"><use href="#track-e" class="outer"/><use href="#track-e" class="edge"/><use href="#track-e" class="core"/></g>
          <g stroke="url(#gw)"><use href="#track-w" class="outer"/><use href="#track-w" class="edge"/><use href="#track-w" class="core"/></g>
          <path d="M1650 3480 1600 3590 1520 3730 1450 3860" stroke="#48b23a" stroke-width="76"/><path d="M1650 3480 1600 3590 1520 3730 1450 3860" stroke="#66dd45" stroke-width="50"/>
          <path d="M1920 3450Q1962 3500 1960 3580L1925 3720 1860 3860" stroke="#49b540" stroke-width="104"/><path d="M1955 3460Q1985 3520 1980 3590L1950 3720 1910 3860" stroke="#b8e826" stroke-width="16"/><path d="M1920 3450Q1950 3510 1947 3580L1915 3720 1870 3860" stroke="#5add50" stroke-width="66"/>
        </g>

        <g class="place">
          <text x="1160" y="412">一ツ橋</text><text x="2920" y="1790">大手町</text><text x="675" y="2384">千代田</text><text x="955" y="3918">皇居外苑</text><text x="3582" y="800">内</text>
          <text x="2992" y="2910" class="chome">1丁目</text>
        </g>
        <g class="street">
          <text transform="translate(2435 12) rotate(5)">国</text><text transform="translate(2565 36) rotate(5)">警</text><text transform="translate(2677 52) rotate(5)">察</text><text transform="translate(2785 70) rotate(5)">通</text><text transform="translate(2897 80) rotate(5)">り</text>
          <text transform="translate(2284 510) rotate(38)">都</text><text transform="translate(2362 592) rotate(34)">道</text><text class="num" transform="translate(2432 668) rotate(22)">4</text><text class="num" transform="translate(2508 693) rotate(16)">0</text><text class="num" transform="translate(2585 706) rotate(14)">2</text><text transform="translate(2688 724) rotate(12)">号</text>
          <text transform="translate(2866 1308) rotate(8)">都</text><text transform="translate(2841 1423) rotate(8)">道</text><text class="num" transform="translate(2811 1538) rotate(8)">4</text><text class="num" transform="translate(2791 1648) rotate(8)">0</text><text class="num" transform="translate(2768 1759) rotate(8)">3</text><text transform="translate(2747 1868) rotate(8)">号</text>
          <text transform="translate(2324 3547) rotate(12)">国</text><text transform="translate(2287 3657) rotate(12)">道</text><text class="num" transform="translate(2270 3785) rotate(12)">1</text><text transform="translate(2247 3880) rotate(12)">号</text>
          <text transform="translate(3047 3818) rotate(35)">都</text><text transform="translate(3187 3858) rotate(35)">道</text>
          <g class="naka"><text transform="translate(2930 2613) rotate(13)">丸</text><text transform="translate(2908 2705) rotate(13)">の</text><text transform="translate(2881 2810) rotate(13)">内</text><text transform="translate(2858 2908) rotate(13)">仲</text><text transform="translate(2828 3006) rotate(13)">通</text><text transform="translate(2805 3101) rotate(13)">り</text></g>
        </g>
        <g class="shield" transform="translate(2961 817)"><path class="s1" d="M-70-87H70Q78-87 83-79L119-10Q124 0 119 10L83 79Q78 87 70 87H-70Q-78 87-83 79L-119 10Q-124 0-119-10L-83-79Q-78-87-70-87Z"/><path class="s2" d="M-68-74H68L107 0 68 74H-68L-107 0Z"/><text y="31">402</text></g>
        <g class="shield" transform="translate(2685 2112)"><path class="s1" d="M-70-87H70Q78-87 83-79L119-10Q124 0 119 10L83 79Q78 87 70 87H-70Q-78 87-83 79L-119 10Q-124 0-119-10L-83-79Q-78-87-70-87Z"/><path class="s2" d="M-68-74H68L107 0 68 74H-68L-107 0Z"/><text y="31">403</text></g>

        <circle cx="1518" cy="672" r="88" fill="#fff" stroke="#f5a8a8" stroke-width="3"/><circle cx="1518" cy="672" r="63" fill="#f50000"/>
        <circle cx="1806" cy="764" r="88" fill="#fff" stroke="#b4e8a0" stroke-width="3"/><circle cx="1806" cy="764" r="63" fill="#53d713"/>
        <g class="km">
          <g filter="url(#drop)"><rect x="1710" y="2538" width="418" height="147" rx="73.500"/></g><text x="1919" y="2657">6 km</text>
          <g filter="url(#drop)"><rect x="1694" y="2955" width="420" height="147" rx="73.500"/></g><text x="1904" y="3074">1 km</text>
          <g filter="url(#drop)"><rect x="1477" y="3342" width="418" height="147" rx="73.500"/></g><text x="1680" y="3461">2 km</text>
          <g filter="url(#drop)"><rect x="1550" y="3350" width="419" height="147" rx="73.500"/></g><text x="1760" y="3470">5 km</text>
        </g>
      </svg>
      <div class="place-chip">千代田区, 日本</div>
    </section>
  </main>
  <div class="home-bar"></div>
</div>
</body>
</html>
```
FILE: styles.css
```css
* { box-sizing: border-box; margin: 0; padding: 0; }
body { background: #fff; font-family: "Liberation Sans", "Noto Sans CJK JP", sans-serif; color: #000; }
.screen { position: relative; width: 1320px; height: 2868px; overflow: hidden; }
p, h1, b, span { font-weight: normal; }

.top { height: 302px; background: #f7f7f7; border-bottom: 1px solid #b2b2b2; }
.status { display: flex; justify-content: space-between; align-items: flex-start; height: 182px; padding: 75px 122px 0 151px; }
.clock { display: flex; align-items: center; gap: 13px; height: 46px; font-family: Inter, sans-serif; }
.clock span { font-size: 54px; font-weight: 600; letter-spacing: -.6px; line-height: 46px; }
.loc { width: 42px; height: 42px; }
.indicators { display: flex; align-items: flex-start; }
.signal { width: 65px; height: 45px; }
.signal path { fill: none; stroke: #000; stroke-width: 11; stroke-linecap: round; }
.wifi { width: 58px; height: 42px; margin: 1px 22px 0; }
.battery { position: relative; width: 86px; height: 45px; margin-right: 7px; border-radius: 14px; background: linear-gradient(90deg, #ff3b30 11px, #adadad 11px); text-align: center; }
.battery span { font: 700 41px/45px Inter, sans-serif; color: #fff; letter-spacing: -1px; }
.battery::after { content: ""; position: absolute; right: -8px; top: 16px; width: 5px; height: 14px; border-radius: 0 6px 6px 0; background: #adadad; }
.nav { display: flex; justify-content: space-between; align-items: center; height: 101px; padding: 0 60px 0 38px; }
.back { width: 40px; height: 66px; }
.back path { fill: none; stroke: #000; stroke-width: 8.500; stroke-linecap: round; stroke-linejoin: round; }
.more { width: 72px; height: 18px; margin-top: 3px; }

main { padding: 0 60px; }
.title { display: flex; justify-content: space-between; height: 295px; padding: 64px 33px 0 0; border-bottom: 3px solid #e5e5e5; }
.date { font-size: 48px; font-weight: 350; letter-spacing: .2px; line-height: 72px; color: #8d8d8d; }
h1 { margin-top: 6px; font-size: 66px; line-height: 100px; letter-spacing: -.9px; white-space: nowrap; }
.pencil { width: 64px; height: 64px; margin-top: 98px; }
.pencil path { fill: none; stroke: #000; stroke-width: 6; stroke-linejoin: round; }

.distance { height: 510px; padding-top: 99px; }
.big { height: 244px; padding-left: 6px; font: italic 900 238px/244px Lato, sans-serif; letter-spacing: 7px; -webkit-text-stroke: 12px #000; }
.big span { font-weight: inherit; letter-spacing: 15px; }
.unit { margin-top: 35px; font-size: 48px; line-height: 58px; color: #8d8d8d; }

.stats { display: grid; grid-template-columns: repeat(3, 400px); column-gap: 24px; height: 497px; grid-template-rows: 223px 274px; }
.stats b { display: flex; align-items: center; height: 90px; font-size: 78px; line-height: 90px; white-space: pre; -webkit-text-stroke: 2.500px #000; }
.stats i { padding: 0 3px; font-style: normal; }
.stats span { display: block; font-size: 48px; font-weight: 350; line-height: 56px; letter-spacing: .6px; color: #8d8d8d; white-space: nowrap; }
.heart { width: 46px; height: 42px; margin: 0 0 4px 16px; }
.heart path { fill: none; stroke: #999; stroke-width: 4.500; }

.map { position: relative; height: 1264px; border-radius: 14px 14px 0 0; overflow: hidden; }
.canvas { display: block; width: 1200px; height: 1264px; }
.place-chip { position: absolute; left: 60px; top: 60px; width: 336px; height: 109px; border-radius: 12px; background: #fff; box-shadow: 0 3px 18px rgba(0, 0, 0, .12); font-size: 42px; font-weight: 350; line-height: 110px; text-align: center; white-space: nowrap; }
.home-bar { position: absolute; left: 425px; top: 2829px; width: 471px; height: 15px; border-radius: 8px; background: #000; }

.city { fill: #f6f6ee; }
.lot { fill: #f2f3ee; }
.park { fill: #e9f0df; }
.haze { fill: #eeefe8; }
.lawn { fill: #d8e9ca; }
.water { fill: #b9e4f4; }
.buildings { fill: #f1f2ed; }
.beige { fill: #faead6; }
.beige path:nth-child(n+2) { stroke: #e2d3b8; stroke-width: 2; }
.paths, .roads, .streets { fill: none; stroke-linejoin: round; }
.paths { stroke: #f7f7f5; }
.paths .fill { fill: #f7f7f5; stroke: none; }
.streets path { stroke: #fff; stroke-width: 13; }
.lane { fill: none; stroke: #dfddd7; stroke-width: 3; }
.plots { fill: none; stroke: #d3d3c9; stroke-width: 3; }
.inset { fill: #e6eedb; stroke: #d6d5cc; stroke-width: 4; }
.inset .thin { fill: #e9f0df; }
.edges { fill: none; stroke: #c9c9be; stroke-width: 3; }
.edges .wide { stroke: #c3c4ba; stroke-width: 5; }
.pink { fill: #ffcfc8; fill-opacity: .34; stroke: #fbbdb2; stroke-width: 3; stroke-opacity: .7; }
.purple { fill: #c9bdea; fill-opacity: .55; stroke: #8493f0; stroke-width: 3; stroke-dasharray: 8 4; }
.drive { fill: none; stroke: #fdf4f4; stroke-width: 17; stroke-linejoin: round; }
.nodes { fill: #fff; opacity: .85; }
.route { fill: none; stroke-linecap: round; stroke-linejoin: round; }
.outer { stroke-width: 60; }
.edge { stroke: #4d5500; stroke-opacity: .18; stroke-width: 60; }
.core { stroke-width: 40; }
.place text { font: 700 164px "Noto Sans CJK JP", sans-serif; fill: #a5a49e; stroke: #fafaf7; stroke-width: 14; paint-order: stroke; stroke-linejoin: round; }
.place .chome { font-size: 120px; font-weight: 500; }
.street text { font: 700 100px "Noto Sans CJK JP", sans-serif; fill: #989590; stroke: #fff; stroke-width: 14; paint-order: stroke; stroke-linejoin: round; text-anchor: middle; dominant-baseline: central; }
.street .num { font-size: 112px; }
.street .naka text { font-size: 88px; }
.s1 { fill: #b4d0fe; }
.s2 { fill: none; stroke: #fff; stroke-width: 10; stroke-linejoin: round; }
.shield text { font: 700 88px "Noto Sans CJK JP", sans-serif; fill: #fff; text-anchor: middle; }
.km rect { fill: #fff; }
.km text { font: 126px "Liberation Sans", sans-serif; text-anchor: middle; }
```
